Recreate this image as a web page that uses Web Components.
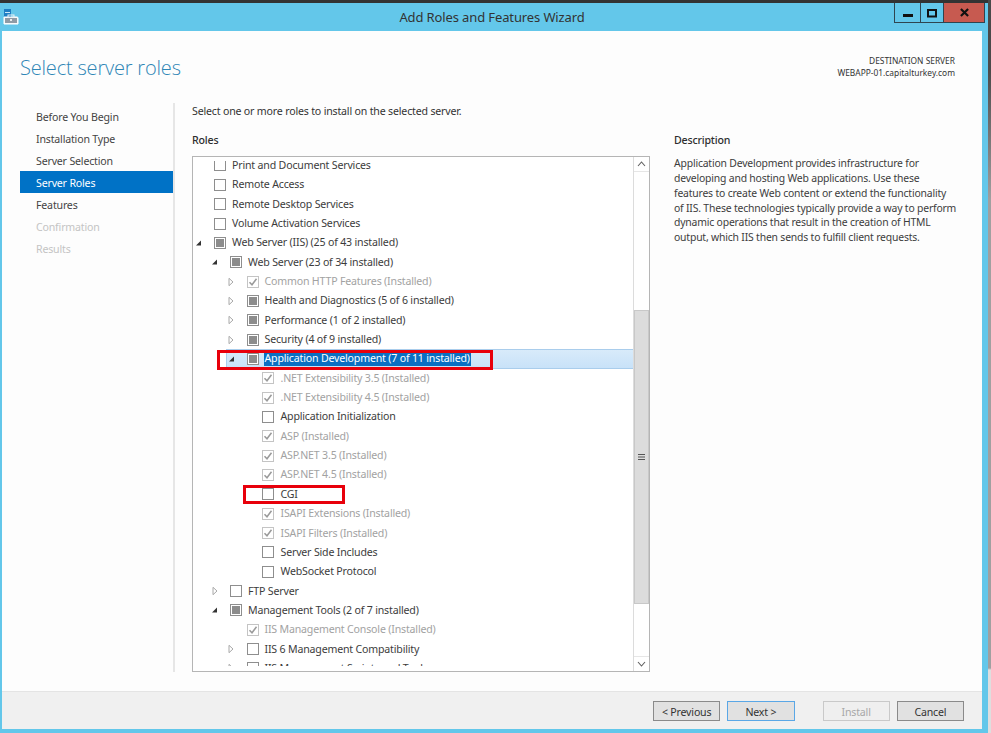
<!DOCTYPE html>
<html><head><meta charset="utf-8"><title>Add Roles and Features Wizard</title>
<style>
html,body{margin:0;padding:0;background:#fff;}
body{width:991px;height:733px;overflow:hidden;font-family:"Noto Sans","Open Sans",sans-serif;color:#3c3c3c;letter-spacing:-.18px;
background:linear-gradient(#4a4a4a 0,#4a4a4a 70px,#a0a0a0 200px,#a0a0a0 668px,#dedede 670px,#dedede 733px);}
</style></head><body>
<wizard-window>
  <title-bar slot="title">Add Roles and Features Wizard</title-bar>
  <wizard-header slot="header" heading="Select server roles" label="DESTINATION SERVER" server="WEBAPP-01.capitalturkey.com"></wizard-header>
  <wizard-nav slot="nav">
    <nav-item>Before You Begin</nav-item>
    <nav-item>Installation Type</nav-item>
    <nav-item>Server Selection</nav-item>
    <nav-item selected>Server Roles</nav-item>
    <nav-item>Features</nav-item>
    <nav-item disabled>Confirmation</nav-item>
    <nav-item disabled>Results</nav-item>
  </wizard-nav>
  <roles-panel slot="main">
    <tree-row level="0" state="off" text="Print and Document Services"></tree-row>
    <tree-row level="0" state="off" text="Remote Access"></tree-row>
    <tree-row level="0" state="off" text="Remote Desktop Services"></tree-row>
    <tree-row level="0" state="off" text="Volume Activation Services"></tree-row>
    <tree-row level="0" state="mixed" exp="open" text="Web Server (IIS) (25 of 43 installed)"></tree-row>
    <tree-row level="1" state="mixed" exp="open" text="Web Server (23 of 34 installed)"></tree-row>
    <tree-row level="2" state="checked" exp="closed" dim text="Common HTTP Features (Installed)"></tree-row>
    <tree-row level="2" state="mixed" exp="closed" text="Health and Diagnostics (5 of 6 installed)"></tree-row>
    <tree-row level="2" state="mixed" exp="closed" text="Performance (1 of 2 installed)"></tree-row>
    <tree-row level="2" state="mixed" exp="closed" text="Security (4 of 9 installed)"></tree-row>
    <tree-row level="2" state="mixed" exp="open" selected mark text="Application Development (7 of 11 installed)"></tree-row>
    <tree-row level="3" state="checked" dim text=".NET Extensibility 3.5 (Installed)"></tree-row>
    <tree-row level="3" state="checked" dim text=".NET Extensibility 4.5 (Installed)"></tree-row>
    <tree-row level="3" state="off" text="Application Initialization"></tree-row>
    <tree-row level="3" state="checked" dim text="ASP (Installed)"></tree-row>
    <tree-row level="3" state="checked" dim text="ASP.NET 3.5 (Installed)"></tree-row>
    <tree-row level="3" state="checked" dim text="ASP.NET 4.5 (Installed)"></tree-row>
    <tree-row level="3" state="off" mark="cgi" text="CGI"></tree-row>
    <tree-row level="3" state="checked" dim text="ISAPI Extensions (Installed)"></tree-row>
    <tree-row level="3" state="checked" dim text="ISAPI Filters (Installed)"></tree-row>
    <tree-row level="3" state="off" text="Server Side Includes"></tree-row>
    <tree-row level="3" state="off" text="WebSocket Protocol"></tree-row>
    <tree-row level="1" state="off" exp="closed" text="FTP Server"></tree-row>
    <tree-row level="1" state="mixed" exp="open" text="Management Tools (2 of 7 installed)"></tree-row>
    <tree-row level="2" state="checked" dim text="IIS Management Console (Installed)"></tree-row>
    <tree-row level="2" state="off" exp="closed" text="IIS 6 Management Compatibility"></tree-row>
    <tree-row level="2" state="off" exp="closed" text="IIS Management Scripts and Tools"></tree-row>
  </roles-panel>
  <wizard-footer slot="footer">
    <wiz-button>&lt; Previous</wiz-button>
    <wiz-button focus>Next &gt;</wiz-button>
    <wiz-button disabled gap>Install</wiz-button>
    <wiz-button>Cancel</wiz-button>
  </wizard-footer>
</wizard-window>
<script>
const def=(name,html)=>{customElements.define(name,class extends HTMLElement{
  connectedCallback(){ if(this.shadowRoot) return; const r=this.attachShadow({mode:'open'});
    r.innerHTML=typeof html==='function'?html(this):html; }
});};
def('wizard-window',`<style>
:host{display:flex;flex-direction:column;width:988px;height:733px;background:#63c7ea;border-top:3px solid #333;box-sizing:border-box;}
.client{flex:1;min-height:0;margin:0 6px 4px 2px;background:#fdfdfd;display:flex;flex-direction:column;}
.mid{flex:1;min-height:0;display:flex;padding:0 0 19px 18px;}
</style><slot name="title"></slot><div class="client"><slot name="header"></slot><div class="mid"><slot name="nav"></slot><slot name="main"></slot></div><slot name="footer"></slot></div>`);
def('title-bar',`<style>
:host{display:flex;height:28px;flex:none;position:relative;color:#333;font-size:13px;letter-spacing:-.12px;}
.ic{position:absolute;left:3px;top:6px;}
.t{flex:1;text-align:center;line-height:28px;padding-right:4px;}
.btns{position:absolute;left:894px;top:0;display:flex;height:19px;border:solid #2f4550;border-width:0 1px 1px 1px;}
.b{display:flex;align-items:center;justify-content:center;box-sizing:border-box;}
.b+.b{border-left:1px solid #2f4550;}
.close{background:#c75a50;}
</style>
<svg class="ic" width="16" height="18" viewBox="0 0 16 18"><rect x="1" y="0" width="7" height="14" fill="#1f7fc4"/><rect x="2" y="3" width="5" height="1" fill="#cfe8f7"/><path d="M1 8h13a1 1 0 0 1 1 1v6H1z" fill="#f2f5f7" stroke="#fff"/><path d="M2 9h12v5H2z" fill="#8f9ba6"/><rect x="5" y="6" width="6" height="2.5" fill="none" stroke="#eef2f4"/><rect x="7" y="10" width="2" height="2" fill="#e8edf0"/></svg>
<div class="t"><slot></slot></div>
<div class="btns">
<div class="b" style="width:25px"><svg width="10" height="10" viewBox="0 0 10 10"><rect x="0" y="6" width="10" height="3" fill="#111"/></svg></div>
<div class="b" style="width:23px"><svg width="10" height="10" viewBox="0 0 10 10"><path d="M1 2h8v6.5H1z" fill="none" stroke="#111" stroke-width="2"/></svg></div>
<div class="b close" style="width:41px"><svg width="9" height="9" viewBox="0 0 10 10"><path d="M1 1l8 8M9 1l-8 8" stroke="#111" stroke-width="2.4" fill="none"/></svg></div>
</div>`);
def('wizard-header',h=>`<style>
:host{display:flex;justify-content:space-between;flex:none;height:72px;box-sizing:border-box;padding:0 27px 0 18px;}
h1{margin:21px 0 0;font:300 20px/32px "Open Sans",sans-serif;color:#2f86b6;letter-spacing:-.19px;}
.d{margin-top:24px;text-align:right;font-size:8.4px;line-height:12px;color:#333;letter-spacing:0;}
</style><h1>${h.getAttribute('heading')}</h1><div class="d"><div>${h.getAttribute('label')}</div><div>${h.getAttribute('server')}</div></div>`);
def('wizard-nav',`<style>
:host{display:flex;flex-direction:column;flex:none;width:155px;padding-top:2px;box-sizing:border-box;border-right:2px solid #e6e6e6;}
</style><slot></slot>`);
def('nav-item',h=>`<style>
:host{display:block;height:22px;line-height:24px;padding-left:16px;width:137px;font-size:10.6px;color:#444;}
:host([selected]){background:#0072c6;color:#fff;width:153px;box-sizing:border-box;}
:host([disabled]){color:#c4c4c4;}
</style><slot></slot>`);
def('roles-panel',`<style>
:host{display:flex;flex-direction:column;flex:1;min-width:0;padding-left:17px;font-size:10.6px;}
.i{height:15px;line-height:17px;color:#333;}
.cols{display:flex;flex:1;min-height:0;}
.left{width:458px;flex:none;display:flex;flex-direction:column;}
.lab{font-weight:500;height:15px;line-height:17px;margin-top:14px;margin-bottom:9px;color:#2e2e2e;}
.box{flex:1;min-height:0;border:1px solid #b5b5b5;background:#fff;display:flex;position:relative;box-sizing:border-box;}
.view{flex:1;min-width:0;overflow:hidden;margin:4px 0 5px;position:relative;}
.tree{margin-top:-5.2px;}
.sb{width:15px;flex:none;border-left:1px solid #dcdcdc;display:flex;flex-direction:column;background:#fff;}
.ar{height:15px;flex:none;display:flex;align-items:center;justify-content:center;border-bottom:1px solid #e6e6e6;box-sizing:border-box;}
.ar.d{border-bottom:0;border-top:1px solid #e6e6e6;}
.track{flex:1;display:flex;flex-direction:column;padding-top:138px;padding-bottom:52px;}
.thumb{flex:1;background:#dcdcdc;border:1px solid #c8c8c8;display:flex;align-items:center;justify-content:center;box-sizing:border-box;}
.desc{flex:1;padding-left:24px;padding-right:24px;}
p{margin:1px 0 0;line-height:14.85px;color:#3c3c3c;font-size:10.4px;}
</style>
<div class="i">Select one or more roles to install on the selected server.</div>
<div class="cols">
<div class="left"><div class="lab">Roles</div>
<div class="box"><div class="view"><div class="tree"><slot></slot></div></div>
<div class="sb"><div class="ar"><svg width="9" height="6" viewBox="0 0 9 6"><path d="M1 5l3.5-4L8 5" fill="none" stroke="#606060" stroke-width="1.1"/></svg></div>
<div class="track"><div class="thumb"><svg width="7" height="7" viewBox="0 0 7 7"><path d="M0 .5h7M0 3h7M0 5.5h7" stroke="#555" stroke-width="1"/></svg></div></div>
<div class="ar d"><svg width="9" height="6" viewBox="0 0 9 6"><path d="M1 1l3.5 4L8 1" fill="none" stroke="#606060" stroke-width="1.1"/></svg></div></div>
</div></div>
<div class="desc"><div class="lab">Description</div>
<p>Application Development provides infrastructure for developing and hosting Web applications. Use these features to create Web content or extend the functionality of IIS. These technologies typically provide a way to perform dynamic operations that result in the creation of HTML output, which IIS then sends to fulfill client requests.</p></div>
</div>`);
def('tree-row',h=>{
 const lv=+h.getAttribute('level'),st=h.getAttribute('state'),ex=h.getAttribute('exp');
 const dim=h.hasAttribute('dim'),sel=h.hasAttribute('selected'),mark=h.getAttribute('mark');
 const x=[21,37,53.5,68.5][lv];
 const expSvg=ex==='open'?`<svg width="7" height="7" viewBox="0 0 7 7"><path d="M6 1v5H1z" fill="#333"/></svg>`:ex==='closed'?`<svg width="6" height="9" viewBox="0 0 6 9"><path d="M1 .8L5 4.5 1 8.2z" fill="#fff" stroke="#a8a8a8"/></svg>`:'';
 const bc=dim?'#c4c4c4':'#8e8e8e';
 const inner=st==='mixed'?`<i class="m"></i>`:st==='checked'?`<svg width="10" height="10" viewBox="0 0 10 10" style="display:block"><path d="M1.5 5.2L4 7.8 8.5 1.8" fill="none" stroke="#9a9a9a" stroke-width="1.5"/></svg>`:'';
 return `<style>
 :host{display:block;height:19.35px;}
 .r{height:100%;display:flex;align-items:center;position:relative;box-sizing:border-box;padding-left:${x}px;}
 .e{position:absolute;left:${x-20.5}px;width:10px;top:50%;transform:translateY(-50%);display:flex;align-items:center;justify-content:center;}
 .c{width:12px;height:12px;border:1px solid ${bc};box-sizing:border-box;background:#fff;display:flex;align-items:center;justify-content:center;flex:none;}
 .m{width:8px;height:8px;background:#8c8c8c;display:block;}
 .t{margin-left:${lv===3?7:6}px;white-space:nowrap;color:${dim?'#a2a2a2':'#3c3c3c'};line-height:15px;}
 .sel .t{background:#0a6fc2;color:#fff;padding:0 1px;margin-left:5px;}
 .sel{background:linear-gradient(#d8ebfa,#c8e2f8);border:1px solid #a9cdec;margin-left:33px;width:410px;padding-left:${x-34}px;}
 .sel .e{left:-1px;}
 .red{position:absolute;border:3px solid #e8000b;box-sizing:border-box;pointer-events:none;z-index:3;}
 </style><div class="r ${sel?'sel':''}"><span class="e">${expSvg}</span><span class="c">${inner}</span><span class="t">${h.getAttribute('text')}</span>
 ${mark==='cgi'?`<span class="red" style="left:49.5px;top:0;width:102px;height:19px"></span>`:mark!==null?`<span class="red" style="left:-10px;top:0;width:276px;height:20px"></span>`:''}</div>`;
});
def('wizard-footer',`<style>
:host{display:flex;align-items:flex-start;flex:none;height:38px;box-sizing:border-box;background:#f0f0f0;border-top:1px solid #e4e4e4;padding:9px 18px 0 651px;gap:7px;}
</style><slot></slot>`);
def('wiz-button',h=>`<style>
:host{display:block;width:68px;height:20px;box-sizing:border-box;border:1px solid #8a8a8a;background:#e1e1e1;text-align:center;font-size:10.6px;line-height:20px;color:#333;}
:host([focus]){border-color:#5aa7e6;}
:host([disabled]){border-color:#c9c9c9;background:#efefef;color:#a8a8a8;}
:host([gap]){margin-left:21px;}
</style><slot></slot>`);
</script>
</body></html>
